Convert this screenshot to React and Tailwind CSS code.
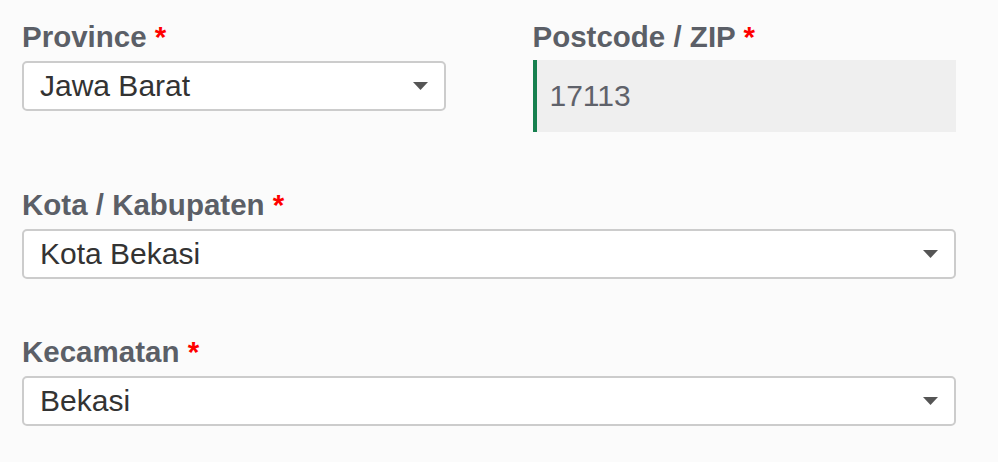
import React from "react";

const font = { fontFamily: '"Liberation Sans", Arial, sans-serif' };

function Label({ children }) {
  return (
    <div className="h-[34px] leading-[34px] text-[29.5px] font-bold text-[#5b5f67] whitespace-nowrap">
      {children} <span className="text-[#ff0000]">*</span>
    </div>
  );
}

function Select({ value }) {
  return (
    <div className="h-[50px] bg-white border-2 border-[#cccccc] rounded-[5px] flex items-center justify-between pl-4 pr-[16px]">
      <span className="text-[30px] text-[#333333] leading-none">{value}</span>
      <svg width="15" height="8" viewBox="0 0 15 8">
        <path d="M0 0 L15 0 L7.5 8 Z" fill="#555555" />
      </svg>
    </div>
  );
}

export default function App() {
  return (
    <div className="w-[998px] h-[462px] bg-[#fbfbfb] pt-[20px] pl-[22px]" style={font}>
      <div className="w-[934px] flex flex-col gap-[56px]">
        <div className="grid grid-cols-2 gap-[87px]">
          <div>
            <Label>Province</Label>
            <div className="mt-[7px]">
              <Select value="Jawa Barat" />
            </div>
          </div>
          <div>
            <Label>Postcode / ZIP</Label>
            <div className="mt-[6px] h-[72px] bg-[#efefef] border-l-4 border-[#16804f] flex items-center pl-[13px]">
              <span className="text-[30px] text-[#5f626a] leading-none">17113</span>
            </div>
          </div>
        </div>
        <div>
          <Label>Kota / Kabupaten</Label>
          <div className="mt-[7px]">
            <Select value="Kota Bekasi" />
          </div>
        </div>
        <div>
          <Label>Kecamatan</Label>
          <div className="mt-[7px]">
            <Select value="Bekasi" />
          </div>
        </div>
      </div>
    </div>
  );
}
